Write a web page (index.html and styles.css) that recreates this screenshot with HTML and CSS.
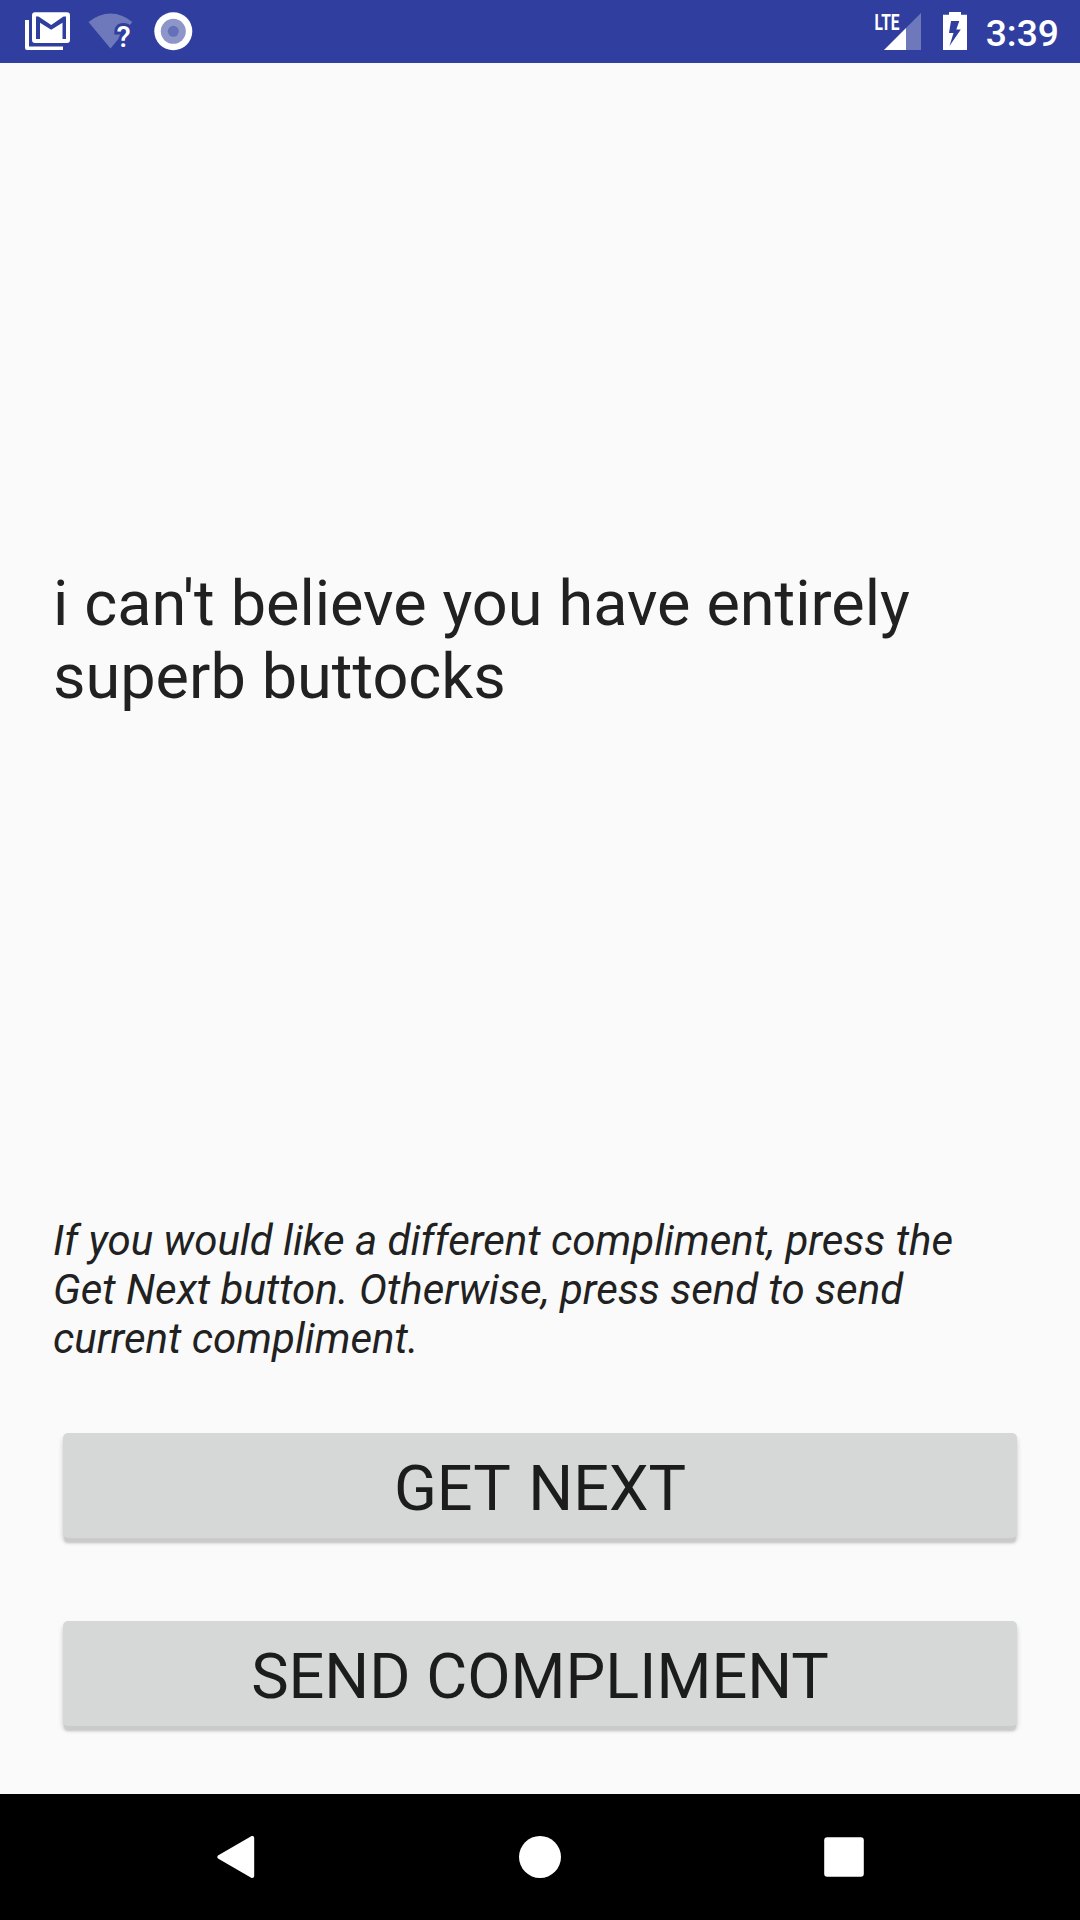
FILE: index.html
```html
<!DOCTYPE html>
<html lang="en">
<head>
<meta charset="utf-8">
<title>Compliments</title>
<link rel="stylesheet" href="styles.css">
</head>
<body>
<div class="screen">
  <header class="status-bar">
    <svg class="status-left" width="200" height="63" viewBox="0 0 200 63">
      <path class="solid" d="M25 20h4v26.500h34v3.500H27a2 2 0 0 1-2-2z"/>
      <path class="solid" fill-rule="evenodd" d="M35 12.300h32a3 3 0 0 1 3 3V40a3 3 0 0 1-3 3H35a3 3 0 0 1-3-3V15.300a3 3 0 0 1 3-3zM36 16.500V39h4V22.800l11.200 7L62.500 22.800V39h3.500V16.500h-2.500L51.200 25 38.500 16.500z"/>
      <path class="faded" d="M88.500 22Q99 13.500 110.500 13.500T132.300 22L110.500 48.500z"/>
      <text class="unknown" x="116.500" y="46.500">?</text>
      <circle class="solid" cx="173.300" cy="31.300" r="19"/>
      <circle class="ring" cx="173.300" cy="31.300" r="12.500"/>
      <circle class="core" cx="173.300" cy="31.300" r="5.500"/>
    </svg>
    <div class="status-right">
      <svg width="100" height="63" viewBox="870 0 100 63">
        <path class="faded" d="M906 28l15-15v37h-15z"/>
        <path class="solid" d="M884 50l22-22v22z"/>
        <text class="lte" x="874.500" y="29.700" textLength="25" lengthAdjust="spacingAndGlyphs">LTE</text>
        <path class="solid" fill-rule="evenodd" d="M949 12h12v2.700h6V50h-24V14.700h6zM951 21l-2 12h4.500L949.500 46 960.800 29.500h-4.500l3-8.500z"/>
      </svg>
      <span class="clock">3:39</span>
    </div>
  </header>
  <main class="content">
    <section class="compliment">
      <p class="compliment-text">i can't believe you have entirely superb buttocks</p>
    </section>
    <p class="hint">If you would like a different compliment, press the Get Next button. Otherwise, press send to send current compliment.</p>
    <div class="actions">
      <button class="action action-next">GET NEXT</button>
      <button class="action">SEND COMPLIMENT</button>
    </div>
  </main>
  <nav class="nav-bar">
    <svg width="42" height="42" viewBox="0 0 42 42"><path class="solid back" d="M37.200 2v38L4.400 21z"/></svg>
    <svg width="42" height="42" viewBox="0 0 42 42"><circle class="solid" cx="21" cy="21" r="21"/></svg>
    <svg width="42" height="42" viewBox="0 0 42 42"><rect class="solid" x="1.200" y="1.200" width="39.600" height="39.600" rx="3"/></svg>
  </nav>
</div>
</body>
</html>
```
FILE: styles.css
```css
* {
  box-sizing: border-box;
}

body {
  margin: 0;
  background: #fafafa;
  color: #212121;
  font-family: Roboto, sans-serif;
}

svg {
  display: block;
}

.screen {
  display: flex;
  flex-direction: column;
  width: 1080px;
  height: 1920px;
}

.status-bar {
  display: flex;
  justify-content: space-between;
  height: 63px;
  background: #303f9f;
  color: #fff;
}

.status-right {
  display: flex;
  gap: 16px;
  padding-right: 21px;
}

.clock {
  padding-top: 2px;
  font-size: 37.250px;
  font-weight: 500;
  line-height: 63px;
}

.solid {
  fill: #fff;
}

.faded {
  fill: #6e79bb;
}

.ring {
  fill: #8d95c9;
}

.core {
  fill: #6470b7;
}

.back {
  stroke: #fff;
  stroke-width: 4px;
  stroke-linejoin: round;
}

.unknown {
  fill: #fff;
  stroke: #303f9f;
  stroke-width: 6px;
  paint-order: stroke;
  font-size: 29px;
  font-weight: 500;
}

.lte {
  fill: #fff;
  font-size: 22.500px;
  font-weight: 700;
}

.content {
  display: flex;
  flex: 1;
  flex-direction: column;
  padding: 0 53px 68px;
}

.compliment {
  display: flex;
  flex: 1;
  align-items: center;
  padding-top: 1px;
}

.compliment-text {
  margin: 0;
  font-size: 63px;
  line-height: 73px;
  word-spacing: 0.300px;
}

.hint {
  margin: 0;
  padding-right: 53px;
  font-size: 42px;
  font-style: italic;
  line-height: 49px;
}

.actions {
  display: flex;
  flex-direction: column;
  gap: 83px;
  margin: 70px 10px 0;
}

.action {
  height: 105px;
  padding: 6px 0 0;
  border: 0;
  border-radius: 5px;
  background: #d6d7d7;
  box-shadow: 0 6px 2px -1px #cacaca, 0 4px 5px rgba(0, 0, 0, 0.2);
  color: #1c1c1c;
  font-family: inherit;
  font-size: 63px;
  line-height: 73px;
}

.action-next {
  word-spacing: 3px;
}

.nav-bar {
  display: flex;
  align-items: center;
  justify-content: space-between;
  height: 126px;
  padding: 0 215px;
  background: #000;
}
```
